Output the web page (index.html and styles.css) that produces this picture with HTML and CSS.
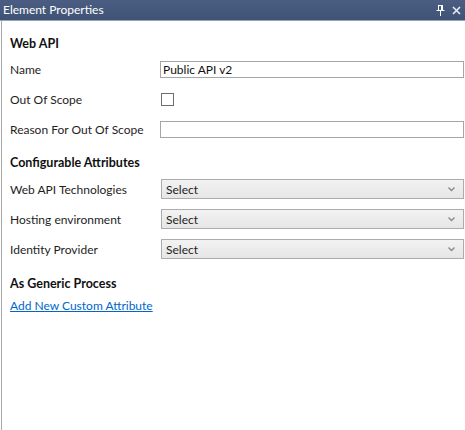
FILE: index.html
```html
<!DOCTYPE html>
<html>
<head>
<meta charset="utf-8">
<link rel="stylesheet" href="styles.css">
</head>
<body>
<div class="panel">
  <div class="titlebar">
    <span class="title">Element Properties</span>
    <span class="tools">
      <svg class="pin" width="9" height="11" viewBox="0 0 9 11"><path d="M2 0.5h5M2.5 0.5v5M5.5 0.5v5M6.5 0.5v5M0.5 5.5h8M4.5 6v5" stroke="#fff" stroke-width="1" fill="none"/></svg>
      <svg class="close" width="9" height="9" viewBox="0 0 9 9"><path d="M1 1L8 8M8 1L1 8" stroke="#e8ecf4" stroke-width="1.6" fill="none"/></svg>
    </span>
  </div>
  <div class="content">
    <div class="heading first">Web API</div>
    <div class="row">
      <label class="label">Name</label>
      <div class="field"><div class="textbox">Public API v2</div></div>
    </div>
    <div class="row">
      <label class="label">Out Of Scope</label>
      <div class="field"><div class="checkbox"></div></div>
    </div>
    <div class="row">
      <label class="label">Reason For Out Of Scope</label>
      <div class="field"><div class="textbox"></div></div>
    </div>
    <div class="heading second">Configurable Attributes</div>
    <div class="row">
      <label class="label">Web API Technologies</label>
      <div class="field"><div class="select"><span>Select</span><svg width="7" height="5" viewBox="0 0 7 5"><path d="M0.5 0.5L3.5 3.5L6.5 0.5" stroke="#8a8a8a" stroke-width="1.4" fill="none"/></svg></div></div>
    </div>
    <div class="row">
      <label class="label">Hosting environment</label>
      <div class="field"><div class="select"><span>Select</span><svg width="7" height="5" viewBox="0 0 7 5"><path d="M0.5 0.5L3.5 3.5L6.5 0.5" stroke="#8a8a8a" stroke-width="1.4" fill="none"/></svg></div></div>
    </div>
    <div class="row">
      <label class="label">Identity Provider</label>
      <div class="field"><div class="select"><span>Select</span><svg width="7" height="5" viewBox="0 0 7 5"><path d="M0.5 0.5L3.5 3.5L6.5 0.5" stroke="#8a8a8a" stroke-width="1.4" fill="none"/></svg></div></div>
    </div>
    <div class="heading third">As Generic Process</div>
    <div class="linkrow"><a class="link" href="#">Add New Custom Attribute</a></div>
  </div>
</div>
</body>
</html>
```
FILE: styles.css
```css
* { box-sizing: border-box; }
html, body { margin: 0; padding: 0; background: #fff; }
body {
  font-family: "Lato", "Open Sans", sans-serif;
  font-size: 12px;
  color: #1e1e1e;
  width: 465px;
  height: 430px;
  overflow: hidden;
}
.panel {
  width: 465px;
  height: 430px;
  display: flex;
  flex-direction: column;
}
.titlebar {
  height: 21px;
  background: linear-gradient(#4b5e82, #3f5376);
  border-bottom: 1px solid #9aa3b1;
  display: flex;
  align-items: center;
  justify-content: space-between;
  padding: 0 4px 0 3px;
}
.title {
  color: #fff;
  font-size: 12px;
  line-height: 20px;
}
.tools {
  display: flex;
  align-items: center;
  gap: 7px;
}
.content {
  flex: 1;
  margin-left: 1px;
  border-left: 1px solid #a9a9a9;
  padding: 13px 0 0 8px;
}
.heading {
  height: 20px;
  line-height: 20px;
  font-size: 12.5px;
  font-weight: 700;
  color: #111;
}
.second { margin-top: 9px; margin-bottom: 1px; }
.third { margin-top: 10px; }
.row {
  height: 30px;
  display: flex;
  align-items: center;
}
.label {
  width: 150px;
  flex: none;
}
.field {
  flex: 1;
  display: flex;
  align-items: center;
}
.textbox {
  width: 304px;
  height: 17px;
  border: 1px solid #a6a6a6;
  background: #fff;
  padding-left: 2px;
  line-height: 15px;
  color: #111;
}
.checkbox {
  width: 13px;
  height: 13px;
  margin-left: 1px;
  border: 1px solid #6e6e6e;
  background: #fff;
}
.select {
  width: 303px;
  margin-left: 1px;
  height: 20px;
  border: 1px solid #acacac;
  background: linear-gradient(#f2f2f2, #e6e6e6);
  display: flex;
  align-items: center;
  justify-content: space-between;
  padding: 0 8px 0 4px;
  color: #1e1e1e;
}
.linkrow {
  height: 20px;
  margin-top: 2px;
  line-height: 20px;
}
.link {
  color: #0066cc;
  text-decoration: underline;
}
```
